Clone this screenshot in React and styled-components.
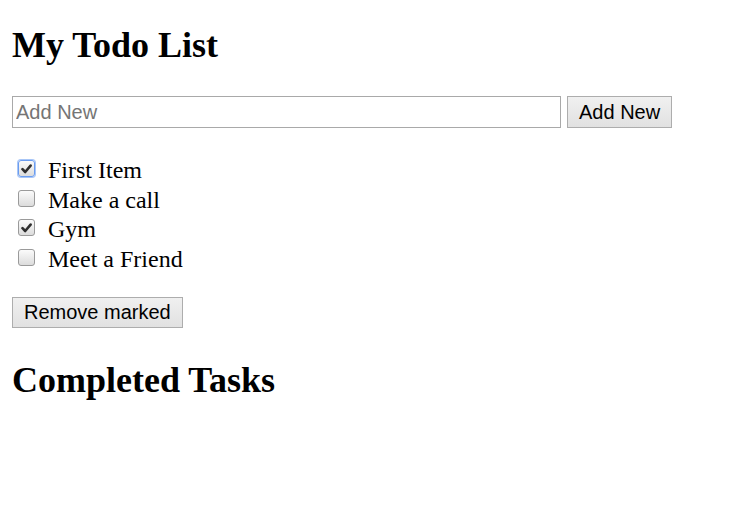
import React from "react";
import styled, { createGlobalStyle } from "styled-components";

const Global = createGlobalStyle`
  html, body { margin: 0; padding: 0; background: #fff; }
  body { font-family: "Liberation Serif", "Times New Roman", serif; color: #000; }
`;

const Page = styled.div`
  padding: 0 12px;
  display: flex;
  flex-direction: column;
  align-items: flex-start;
`;

const Heading = styled.h2`
  margin: ${(p) => p.$top}px 0 0 0;
  font-size: 36px;
  line-height: 40px;
  font-weight: bold;
`;

const AddRow = styled.div`
  margin-top: 31px;
  display: flex;
  gap: 6px;
  height: 32px;
`;

const TextInput = styled.input`
  box-sizing: border-box;
  width: 549px;
  height: 32px;
  margin: 0;
  padding: 0 3px;
  border: 1px solid #a9a9a9;
  font-family: "Liberation Sans", Arial, sans-serif;
  font-size: 20px;
  color: #000;
  outline: none;
  &::placeholder { color: #757575; }
`;

const Button = styled.button`
  box-sizing: border-box;
  height: ${(p) => p.$h}px;
  margin: 0;
  padding: 0 ${(p) => p.$px}px;
  border: 1px solid #adadad;
  border-radius: 0;
  background: linear-gradient(#f0f0f0, #e1e1e1);
  font-family: "Liberation Sans", Arial, sans-serif;
  font-size: 20px;
  color: #000;
  cursor: default;
`;

const List = styled.div`
  margin-top: 28px;
  display: flex;
  flex-direction: column;
`;

const Row = styled.label`
  display: flex;
  align-items: flex-start;
  height: 29.67px;
  font-size: 24px;
  line-height: 29.67px;
`;

const Check = styled.span`
  box-sizing: border-box;
  width: 17px;
  height: 17px;
  margin: 4px 13px 0 6px;
  border: 1px solid ${(p) => (p.$focus ? "#6a9cf0" : "#9a9a9a")};
  border-radius: 3px;
  background: linear-gradient(#fbfbfb, #dcdcdc);
  box-shadow: ${(p) => (p.$focus ? "0 0 0 1px #a8c6f7" : "none")};
  display: flex;
  align-items: center;
  justify-content: center;
`;

const RemoveWrap = styled.div`
  margin-top: 22px;
`;

const items = [
  { text: "First Item", done: true, focus: true },
  { text: "Make a call", done: false },
  { text: "Gym", done: true },
  { text: "Meet a Friend", done: false },
];

function Tick() {
  return (
    <svg width="11" height="10" viewBox="0 0 11 10">
      <path d="M1.5 5.2 L4.2 8 L9.6 1.6" fill="none" stroke="#2e2e2e" strokeWidth="2.6" strokeLinecap="round" strokeLinejoin="round" />
    </svg>
  );
}

export default function App() {
  return (
    <>
      <Global />
      <Page>
        <Heading $top={25}>My Todo List</Heading>
        <AddRow>
          <TextInput placeholder="Add New" />
          <Button $h={32} $px={11}>Add New</Button>
        </AddRow>
        <List>
          {items.map((it) => (
            <Row key={it.text}>
              <Check $focus={it.focus}>{it.done && <Tick />}</Check>
              {it.text}
            </Row>
          ))}
        </List>
        <RemoveWrap>
          <Button $h={31} $px={11}>Remove marked</Button>
        </RemoveWrap>
        <Heading $top={32}>Completed Tasks</Heading>
      </Page>
    </>
  );
}
